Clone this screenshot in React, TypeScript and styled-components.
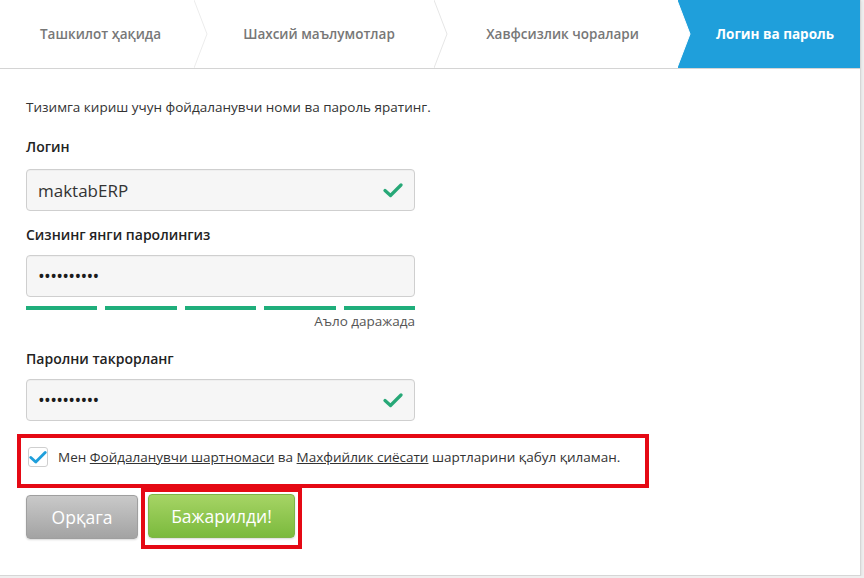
import * as React from "react"
import styled, { createGlobalStyle } from "styled-components"

const GlobalStyle = createGlobalStyle`
    html, body {
        margin: 0;
        padding: 0;
        background: #efefef;
        font-family: "Open Sans", "Noto Sans", sans-serif;
        color: #333;
    }
`

const Panel = styled.div`
    width: 860px;
    height: 575px;
    background: #fff;
    border-right: 1px solid #d6d6d6;
    border-bottom: 1px solid #d6d6d6;
    box-shadow: 1px 1px 2px rgba(0, 0, 0, 0.06);
    display: flex;
    flex-direction: column;
`

const Steps = styled.div`
    display: flex;
    height: 68px;
    border-bottom: 1px solid #d4d4d4;
`

const Step = styled.div<{ $width?: number; $active?: boolean; $shift?: number }>`
    position: relative;
    width: ${({ $width }) => ($width ? `${$width}px` : "auto")};
    flex: ${({ $width }) => ($width ? "none" : "1")};
    display: flex;
    align-items: center;
    justify-content: center;
    padding-left: ${({ $shift }) => $shift || 0}px;
    box-sizing: border-box;
    background: ${({ $active }) => ($active ? "#1f9fdb" : "#fff")};
    color: ${({ $active }) => ($active ? "#fff" : "#777")};
    font-size: 13.5px;
    font-weight: ${({ $active }) => ($active ? 700 : 600)};
`

const Chevron = styled.svg`
    position: absolute;
    top: 0;
    right: -13px;
    z-index: 1;
`

const Body = styled.div`
    padding: 29px 0 0 26px;
    display: flex;
    flex-direction: column;
`

const Intro = styled.p`
    margin: 0;
    font-size: 13.5px;
    line-height: 18px;
    color: #333;
`

const Field = styled.div<{ $top: number }>`
    width: 389px;
    margin-top: ${({ $top }) => $top}px;
    display: flex;
    flex-direction: column;
`

const Label = styled.label<{ $gap: number }>`
    font-size: 14px;
    font-weight: 600;
    line-height: 20px;
    color: #222;
    margin-bottom: ${({ $gap }) => $gap}px;
`

const InputBox = styled.div`
    height: 40px;
    border: 1px solid #cfcfcf;
    border-radius: 4px;
    background: #f6f6f6;
    box-shadow: inset 0 1px 1px rgba(0, 0, 0, 0.03);
    display: flex;
    align-items: center;
    justify-content: space-between;
    padding: 0 11px 0 11px;
`

const InputText = styled.span`
    font-size: 17px;
    color: #333;
`

const Dots = styled.span`
    font-size: 18px;
    letter-spacing: -0.7px;
    color: #1c1c1c;
`

const Strength = styled.div`
    display: flex;
    gap: 8px;
    margin-top: 9px;
`

const Bar = styled.span`
    flex: 1;
    height: 4px;
    background: #1fae7b;
`

const StrengthText = styled.div`
    text-align: right;
    font-size: 13.5px;
    line-height: 16px;
    color: #555;
    margin-top: 3px;
`

const Frame = styled.div`
    border: 4px solid #e50914;
    box-sizing: border-box;
`

const AgreeFrame = styled(Frame)`
    width: 632px;
    height: 54px;
    margin: 13px 0 0 -9px;
    display: flex;
    align-items: center;
    padding: 0 0 9px 7px;
`

const Checkbox = styled.span`
    width: 18px;
    height: 18px;
    border: 1px solid #cfcfcf;
    border-radius: 3px;
    background: #fff;
    display: flex;
    align-items: center;
    justify-content: center;
    margin-right: 10px;
`

const AgreeText = styled.span`
    font-size: 13.5px;
    color: #333;

    & a {
        color: #333;
        text-decoration: underline;
    }
`

const Buttons = styled.div`
    display: flex;
    align-items: flex-start;
`

const Button = styled.button<{ $green?: boolean }>`
    height: 44px;
    border-radius: 4px;
    border: 1px solid ${({ $green }) => ($green ? "#7eb547" : "#9f9f9f")};
    background: ${({ $green }) =>
        $green
            ? "linear-gradient(#a6d465, #7bba3d)"
            : "linear-gradient(#c9c9c9, #a3a3a3)"};
    color: #fff;
    font-family: "Open Sans", sans-serif;
    font-size: 17.5px;
    padding: 0;
    box-shadow: 0 1px 2px rgba(0, 0, 0, 0.15);
`

const BackButton = styled(Button)`
    width: 112px;
    margin-top: 7px;
`

const DoneFrame = styled(Frame)`
    width: 161px;
    height: 61px;
    margin-left: 3px;
    padding: 2px 0 0 3px;
`

const DoneButton = styled(Button)`
    width: 147px;
`

const Check = ({ color = "#27a877" }: { color?: string }) => (
    <svg width="20" height="16" viewBox="0 0 20 16">
        <path d="M2 8.5 L7.5 13.5 L18 3" fill="none" stroke={color} strokeWidth="3.2" strokeLinecap="round" strokeLinejoin="round" />
    </svg>
)

const Sep = ({ fill, stroke }: { fill: string; stroke: string }) => (
    <Chevron width="14" height="68" viewBox="0 0 14 68">
        <path d="M0 0 L13 34 L0 68 Z" fill={fill} />
        <path d="M0 0 L13 34 L0 68" fill="none" stroke={stroke} strokeWidth="1" />
    </Chevron>
)

export default function App() {
    return (
        <>
            <GlobalStyle />
            <Panel>
                <Steps>
                    <Step $width={195} $shift={6}>
                        Ташкилот ҳақида
                        <Sep fill="#fff" stroke="#ececec" />
                    </Step>
                    <Step $width={240} $shift={8}>
                        Шахсий маълумотлар
                        <Sep fill="#fff" stroke="#e6e6e6" />
                    </Step>
                    <Step $width={243} $shift={12}>
                        Хавфсизлик чоралари
                        <Sep fill="#fff" stroke="#fff" />
                    </Step>
                    <Step $active $shift={12}>Логин ва пароль</Step>
                </Steps>
                <Body>
                    <Intro>Тизимга кириш учун фойдаланувчи номи ва пароль яратинг.</Intro>

                    <Field $top={21}>
                        <Label $gap={12}>Логин</Label>
                        <InputBox>
                            <InputText>maktabERP</InputText>
                            <Check />
                        </InputBox>
                    </Field>

                    <Field $top={14}>
                        <Label $gap={10}>Сизнинг янги паролингиз</Label>
                        <InputBox>
                            <Dots>••••••••••</Dots>
                        </InputBox>
                        <Strength>
                            <Bar /><Bar /><Bar /><Bar /><Bar />
                        </Strength>
                        <StrengthText>Аъло даражада</StrengthText>
                    </Field>

                    <Field $top={20}>
                        <Label $gap={10}>Паролни такрорланг</Label>
                        <InputBox>
                            <Dots>••••••••••</Dots>
                            <Check />
                        </InputBox>
                    </Field>

                    <AgreeFrame>
                        <Checkbox>
                            <Check color="#1f9fdb" />
                        </Checkbox>
                        <AgreeText>
                            Мен <a>Фойдаланувчи шартномаси</a> ва <a>Махфийлик сиёсати</a> шартларини қабул қиламан.
                        </AgreeText>
                    </AgreeFrame>

                    <Buttons>
                        <BackButton>Орқага</BackButton>
                        <DoneFrame>
                            <DoneButton $green>Бажарилди!</DoneButton>
                        </DoneFrame>
                    </Buttons>
                </Body>
            </Panel>
        </>
    )
}
